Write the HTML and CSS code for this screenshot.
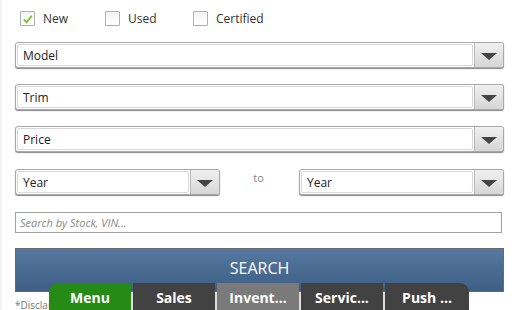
FILE: index.html
```html
<!DOCTYPE html>
<html>
<head>
<meta charset="utf-8">
<link rel="stylesheet" href="styles.css">
</head>
<body>
<div class="page">
  <div class="checks">
    <label class="check"><span class="box checked"><svg viewBox="0 0 14 14" width="14" height="14"><path d="M3 7.5 L6 10.5 L11.5 3.5" fill="none" stroke="#7ac231" stroke-width="2"/></svg></span>New</label>
    <label class="check"><span class="box"></span>Used</label>
    <label class="check"><span class="box"></span>Certified</label>
  </div>
  <div class="select"><span class="val">Model</span><span class="btn"><span class="tri"></span></span></div>
  <div class="select"><span class="val">Trim</span><span class="btn"><span class="tri"></span></span></div>
  <div class="select"><span class="val">Price</span><span class="btn"><span class="tri"></span></span></div>
  <div class="years">
    <div class="select half"><span class="val">Year</span><span class="btn"><span class="tri"></span></span></div>
    <span class="to">to</span>
    <div class="select half"><span class="val">Year</span><span class="btn"><span class="tri"></span></span></div>
  </div>
  <div class="search-input">Search by Stock, VIN...</div>
  <div class="search-btn">SEARCH</div>
  <div class="disclaimer">*Disclaimer</div>
</div>
<nav class="tabs">
  <div class="tab menu">Menu</div>
  <div class="tab">Sales</div>
  <div class="tab active">Invent...</div>
  <div class="tab">Servic...</div>
  <div class="tab last">Push ...</div>
</nav>
</body>
</html>
```
FILE: styles.css
```css
html, body { margin: 0; padding: 0; background: #fff; }
body {
  width: 517px; height: 310px; overflow: hidden; position: relative;
  font-family: "Open Sans", "Noto Sans", sans-serif;
  color: #222;
  border-left: 2px solid #f2f2f2;
  box-sizing: border-box;
}
.page { padding: 11px 13px 0 13px; }
.checks { display: flex; height: 15px; align-items: center; font-size: 12px; color: #333; margin-left: 5px; }
.check { display: flex; align-items: center; }
.check:nth-child(1) { width: 85px; }
.check:nth-child(2) { width: 88px; }
.box {
  width: 13px; height: 13px; border: 1px solid #b0b0b0; border-radius: 1px;
  background: linear-gradient(#f4f4f4, #fff);
  margin-right: 8px; display: flex; align-items: center; justify-content: center;
}
.box svg { display: block; }
.select {
  display: flex; height: 26px; box-sizing: border-box;
  border: 1px solid #a8a8a8; border-radius: 3px;
  box-shadow: 0 1px 1px #888;
  background: #fff;
  font-size: 12px;
}
.checks + .select { margin-top: 16px; }
.val {
  flex: 1; display: flex; align-items: center; padding-left: 5px;
  border: 1px solid #d8d8d8; border-radius: 2px; margin: 1px;
  color: #222;
}
.btn {
  width: 28px; border-left: 1px solid #b8b8b8;
  background: linear-gradient(#f0f0f0, #d6d6d6);
  display: flex; align-items: center; justify-content: center;
  border-radius: 0 3px 3px 0;
}
.tri { width: 0; height: 0; border-left: 8px solid transparent; border-right: 8px solid transparent; border-top: 7px solid #444; margin-top: 2px; }
.select + .select { margin-top: 16px; }
.years { display: flex; align-items: flex-start; margin-top: 17px; }
.years .select { margin-top: 0; width: 205px; }
.years .to { flex: 1; text-align: center; font-size: 11px; color: #888; padding-top: 1px; padding-right: 2px; }
.search-input {
  margin-top: 17px; height: 21px; box-sizing: border-box; margin-right: 2px;
  border: 1px solid #a0a0a0; font-size: 11px; font-style: italic; color: #888;
  padding-left: 4px; display: flex; align-items: center;
}
.search-btn {
  margin-top: 15px; height: 44px; box-sizing: border-box;
  border: 1px solid #6a6a6a;
  background: linear-gradient(#5479a0, #3f5e84);
  color: #fff; font-size: 16px;
  display: flex; align-items: center; justify-content: center;
  padding-bottom: 5px;
}
.disclaimer { font-size: 10px; color: #777; margin-top: 6px; }
.tabs { position: absolute; left: 47px; top: 283px; display: flex; height: 27px; }
.tab {
  width: 82px; height: 27px; margin-right: 2px; box-sizing: border-box;
  background: #424242; color: #fff; font-weight: 700; font-size: 14px;
  display: flex; align-items: center; justify-content: center; padding-top: 2px;
  position: relative;
}
.tab + .tab::before {
  content: ""; position: absolute; left: -2px; top: 9px; bottom: 0; width: 2px; background: #ddd;
}
.tab.menu { background: #268a16; border-radius: 9px 0 0 0; }
.tab.active { background: #7a7a7a; }
.tab.last { width: 84px; border-radius: 0 9px 0 0; }
```
